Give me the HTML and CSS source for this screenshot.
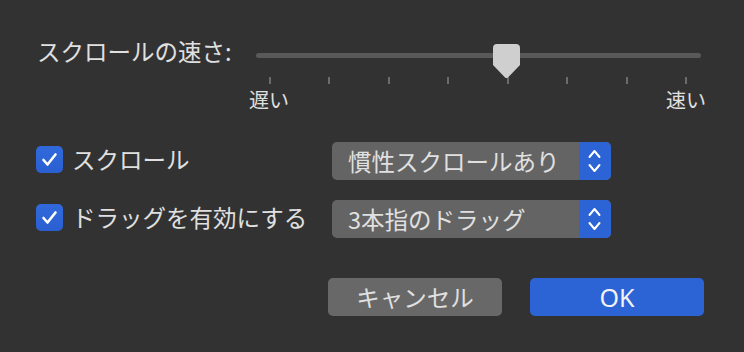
FILE: index.html
```html
<!DOCTYPE html>
<html lang="ja">
<head>
<meta charset="utf-8">
<link rel="stylesheet" href="styles.css">
</head>
<body>
<div class="dialog">
  <div class="speed">
    <div class="speed-label">スクロールの速さ:</div>
    <div class="slider">
      <div class="track">
        <svg class="thumb" width="27" height="35" viewBox="0 0 27 35"><path d="M4,0 H23 Q27,0 27,4 V21 L15.2,33.2 Q13.5,35 11.8,33.2 L0,21 V4 Q0,0 4,0 Z" fill="#cfcfcf"/></svg>
      </div>
      <div class="ticks"><span></span><span></span><span></span><span></span><span></span><span></span><span></span><span></span></div>
      <div class="ends"><span>遅い</span><span>速い</span></div>
    </div>
  </div>
  <div class="options">
    <div class="opt-row">
      <div class="check"><span class="box"><svg width="27" height="27" viewBox="0 0 27 27"><path d="M7.5,14 L11.5,18.5 L19.5,8.5" fill="none" stroke="#fff" stroke-width="2.6" stroke-linecap="round" stroke-linejoin="round"/></svg></span><span class="check-text">スクロール</span></div>
      <div class="popup"><span class="popup-text">慣性スクロールあり</span><span class="popup-arrows"><svg width="32" height="38" viewBox="0 0 32 38"><path d="M10.5,15 L15.5,9 L20.5,15 M10.5,23 L15.5,29 L20.5,23" fill="none" stroke="#fff" stroke-width="2" stroke-linecap="round" stroke-linejoin="round"/></svg></span></div>
    </div>
    <div class="opt-row">
      <div class="check"><span class="box"><svg width="27" height="27" viewBox="0 0 27 27"><path d="M7.5,14 L11.5,18.5 L19.5,8.5" fill="none" stroke="#fff" stroke-width="2.6" stroke-linecap="round" stroke-linejoin="round"/></svg></span><span class="check-text">ドラッグを有効にする</span></div>
      <div class="popup"><span class="popup-text">3本指のドラッグ</span><span class="popup-arrows"><svg width="32" height="38" viewBox="0 0 32 38"><path d="M10.5,15 L15.5,9 L20.5,15 M10.5,23 L15.5,29 L20.5,23" fill="none" stroke="#fff" stroke-width="2" stroke-linecap="round" stroke-linejoin="round"/></svg></span></div>
    </div>
  </div>
  <div class="buttons">
    <div class="btn btn-cancel">キャンセル</div>
    <div class="btn btn-ok">OK</div>
  </div>
</div>
</body>
</html>
```

FILE: styles.css
```css
html, body {
  margin: 0;
  padding: 0;
  background: #323232;
  width: 744px;
  height: 352px;
  overflow: hidden;
}
.dialog {
  font-family: "Noto Sans CJK JP", "Noto Sans", sans-serif;
  font-weight: 400;
  color: #e0e0e0;
  padding: 36px 40px 0 36px;
}
.speed {
  display: flex;
  align-items: flex-start;
}
.speed-label {
  width: 219px;
  font-size: 23.5px;
  line-height: 30px;
  padding-left: 1px;
}
.slider {
  width: 445px;
  padding-top: 17px;
}
.track {
  position: relative;
  height: 5px;
  border-radius: 3px;
  background: #595959;
}
.thumb {
  position: absolute;
  left: 237px;
  top: -9px;
}
.ticks {
  display: flex;
  justify-content: space-between;
  margin: 19px 14px 0 13px;
}
.ticks span {
  width: 2px;
  height: 7px;
  background: #6b6b6b;
}
.ends {
  display: flex;
  justify-content: space-between;
  margin: 3px -5px 0 -7px;
  font-size: 20px;
  line-height: 26px;
}
.options {
  margin-top: 29px;
  display: flex;
  flex-direction: column;
  gap: 20px;
}
.opt-row {
  display: flex;
  align-items: center;
}
.check {
  width: 296px;
  display: flex;
  align-items: center;
}
.box {
  width: 27px;
  height: 27px;
  border-radius: 5px;
  background: linear-gradient(#3169dc, #2a5fd0);
  display: flex;
  margin-top: -4px;
}
.check-text {
  font-size: 23.5px;
  margin-left: 9px;
  line-height: 30px;
  margin-top: -4px;
}
.popup {
  width: 279px;
  height: 38px;
  border-radius: 5px;
  background: #646464;
  display: flex;
  align-items: center;
  justify-content: space-between;
  overflow: hidden;
}
.popup-text {
  font-size: 23.5px;
  line-height: 30px;
  padding-left: 16px;
}
.popup-arrows {
  width: 32px;
  height: 38px;
  background: #2c63d5;
  display: flex;
}
.buttons {
  display: flex;
  justify-content: flex-end;
  gap: 28px;
  margin-top: 40px;
}
.btn {
  width: 174px;
  height: 38px;
  border-radius: 5px;
  font-size: 23.5px;
  line-height: 38px;
  text-align: center;
}
.btn-cancel {
  background: #686868;
}
.btn-ok {
  background: #2c63d5;
  color: #f2f2f2;
  font-family: "Noto Sans", "Noto Sans CJK JP", sans-serif;
  font-size: 25px;
}
```
